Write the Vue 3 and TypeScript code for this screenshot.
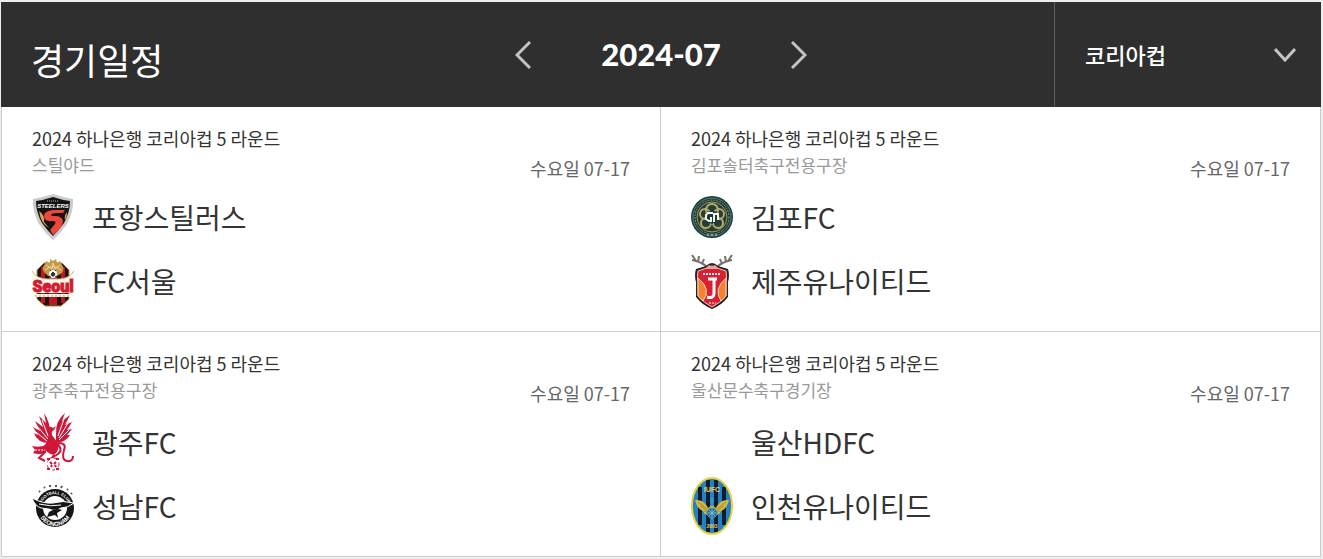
<script setup lang="ts">
import { computed, ref } from 'vue'

interface Team {
  name: string
  crest: string
}

interface Match {
  round: string
  venue: string
  date: string
  teams: Team[]
}

const matches: Match[] = [
  {
    round: '2024 하나은행 코리아컵 5 라운드',
    venue: '스틸야드',
    date: '수요일 07-17',
    teams: [
      { name: '포항스틸러스', crest: 'pohang' },
      { name: 'FC서울', crest: 'seoul' },
    ],
  },
  {
    round: '2024 하나은행 코리아컵 5 라운드',
    venue: '김포솔터축구전용구장',
    date: '수요일 07-17',
    teams: [
      { name: '김포FC', crest: 'gimpo' },
      { name: '제주유나이티드', crest: 'jeju' },
    ],
  },
  {
    round: '2024 하나은행 코리아컵 5 라운드',
    venue: '광주축구전용구장',
    date: '수요일 07-17',
    teams: [
      { name: '광주FC', crest: 'gwangju' },
      { name: '성남FC', crest: 'seongnam' },
    ],
  },
  {
    round: '2024 하나은행 코리아컵 5 라운드',
    venue: '울산문수축구경기장',
    date: '수요일 07-17',
    teams: [
      { name: '울산HDFC', crest: '' },
      { name: '인천유나이티드', crest: 'incheon' },
    ],
  },
]

const league = ref('cup')
const monthIndex = ref(2024 * 12 + 6)
const month = computed(() => {
  const year = Math.floor(monthIndex.value / 12)
  return `${year}-${String((monthIndex.value % 12) + 1).padStart(2, '0')}`
})
</script>

<template>
  <main class="schedule">
    <header class="bar">
      <h1 class="title">경기일정</h1>
      <nav class="months">
        <button type="button" class="arrow" aria-label="이전 달" @click="monthIndex--">
          <svg viewBox="0 0 16 28" width="16" height="28"><path d="M15 1 2 14 15 27" /></svg>
        </button>
        <time class="month">{{ month }}</time>
        <button type="button" class="arrow" aria-label="다음 달" @click="monthIndex++">
          <svg viewBox="0 0 16 28" width="16" height="28"><path d="M1 1 14 14 1 27" /></svg>
        </button>
      </nav>
      <div class="league">
        <select v-model="league" aria-label="대회">
          <option value="cup">코리아컵</option>
        </select>
        <svg class="chevron" viewBox="0 0 22 14" width="22" height="14"><path d="M1 1 11 12 21 1" /></svg>
      </div>
    </header>

    <section class="grid">
      <article v-for="(match, i) in matches" :key="i" class="card">
        <div class="info">
          <div>
            <h2 class="round">{{ match.round }}</h2>
            <p class="venue">{{ match.venue }}</p>
          </div>
          <p class="date">{{ match.date }}</p>
        </div>
        <ul class="teams">
          <li v-for="team in match.teams" :key="team.name" class="team">
            <svg class="crest" viewBox="0 0 44 60" aria-hidden="true">
              <g v-if="team.crest === 'pohang'">
                <path d="M22 7Q31 10 42 12Q43 24 36 37Q30 46 22 53Q14 46 8 37Q1 24 2 12Q13 10 22 7Z" fill="#c9cbcd" />
                <path d="M22 10Q31 13 39 14Q39 25 33 36Q28 43 22 49Q16 43 11 36Q5 25 5 14Q13 13 22 10Z" fill="#171314" />
                <path d="M34 23H22Q13 24 13 29Q13 35 21 34Q26 34 24 37L19 43 22 48Q32 40 32 34Q31 29 24 29Q20 29 20 28Q21 26 26 26H32Z" fill="#ed463b" />
                <path d="M8 24Q14 28 13 35L18 41Q10 37 8 24M36 25Q33 28 34 33Q36 30 36 25" fill="#dfa447" />
                <path d="M16 14H28" stroke="#b9b9b9" stroke-dasharray="1 1" />
                <text x="22" y="21" text-anchor="middle" font-size="6" font-weight="700" font-style="italic" fill="#fff">STEELERS</text>
              </g>
              <g v-else-if="team.crest === 'seoul'">
                <path d="M13 12H31L38 19V48L30 55H14L6 48V19Z" fill="#20120d" stroke="#b48a42" />
                <path d="M10 16H14V52H10ZM18 14H26V54H18ZM30 16H34V52H30Z" fill="#bc1727" />
                <path d="M15 10 19 12 19 8 22 10 25 8 26 12 29 10 31 14Q34 17 31 22L26 25H17L13 21Q10 16 14 13Z" fill="#c39a4d" />
                <path d="M15 14 21 18 22 12 24 18 29 14M14 19Q22 12 30 19" fill="none" stroke="#f1d89a" />
                <path d="M1 20Q6 28 16 28H29Q39 27 43 20V42H1Z" fill="#fffaf0" />
                <path d="M1 20Q6 28 16 28H29Q39 27 43 20" fill="none" stroke="#ccb176" />
                <circle cx="22" cy="23" r="4" fill="#fff" />
                <path d="M22 21 24 23 23 25H21L20 23ZM19 20 20 19M24 19 25 20M18 25 20 26M24 26 26 25" fill="#333" stroke="#333" />
                <text x="22" y="41" text-anchor="middle" font-family="Roboto, sans-serif" font-size="16" font-weight="900" fill="#d21b33" stroke="#d21b33">Seoul</text>
                <path d="M1 43H43V46H1Z" fill="#fff8e7" />
                <path d="M4 45H40" stroke="#b99a64" stroke-dasharray="2 2" />
              </g>
              <g v-else-if="team.crest === 'gimpo'">
                <circle cx="22" cy="30" r="21" fill="#173d39" />
                <circle cx="22" cy="30" r="19" fill="none" stroke="#627d70" />
                <circle cx="22" cy="30" r="17" fill="none" stroke="#8b9474" stroke-dasharray="2 1" />
                <circle cx="22" cy="30" r="15" fill="#213f38" stroke="#aa9656" />
                <g fill="none" stroke="#bcaa6c" stroke-width="2">
                  <circle cx="22" cy="23" r="6" /><circle cx="15" cy="27" r="5" /><circle cx="29" cy="27" r="5" />
                  <circle cx="16" cy="36" r="5" /><circle cx="28" cy="36" r="5" />
                </g>
                <path d="M22 23 28 26V34L22 37 16 34V26Z" fill="#173d39" />
                <path d="M23 26H18L16 28V32L19 34H21V30M24 35V27H28V33" fill="none" stroke="#f6f5e7" stroke-width="2" />
                <path d="M17 48H28" stroke="#d8dfd9" stroke-dasharray="2 2" />
              </g>
              <g v-else-if="team.crest === 'jeju'">
                <g fill="none" stroke="#77706c" stroke-width="2">
                  <path d="M17 16Q13 12 6 10L2 4M8 11 9 5M12 13 14 8M6 10 2 9M27 16Q31 12 38 10L42 4M36 11 35 5M32 13 30 8M38 10 42 9" />
                </g>
                <path d="M16 15Q22 9 28 15L38 18Q40 24 38 31V46Q32 54 22 58Q12 54 6 46V31Q4 24 6 18Z" fill="#292329" />
                <path d="M17 17Q22 13 27 17L36 20Q37 26 36 31V45Q30 52 22 56Q14 52 8 45V31Q7 26 8 20Z" fill="#d91f32" stroke="#f6cac2" />
                <path d="M8 27Q22 38 13 50Q7 46 8 41ZM36 27Q23 38 31 50Q37 46 36 41Z" fill="#f38232" stroke="#ffd4b0" />
                <path d="M15 18 19 14 22 16 25 14 29 18Z" fill="#f7a39d" />
                <path d="M13 23H31" stroke="#ffe2df" stroke-width="2" stroke-dasharray="2 1" />
                <path d="M18 28H27M24 28V43Q23 48 17 46" fill="none" stroke="#fff" stroke-width="3" />
                <path d="M19 52H26" stroke="#fff" stroke-dasharray="2 1" />
              </g>
              <g v-else-if="team.crest === 'gwangju'">
                <g fill="#cf1739">
                  <path d="M19 25Q20 11 13 1L15 11 8 4 12 15 4 9 9 19 2 15 7 23 3 21Q6 31 19 31Z" />
                  <path d="M25 23Q24 9 34 1L31 9 39 3 34 13 41 10 36 18 41 17 36 23 39 23Q35 30 25 31Z" />
                  <path d="M16 17Q18 13 22 16L25 14 23 18Q20 19 21 23L26 30Q30 38 23 43Q15 42 13 34L19 26Z" />
                </g>
                <path d="M11 8 17 24M6 14 17 27M5 20 16 29M33 7 27 24M37 11 28 26M38 18 28 28" stroke="#fff" />
                <path d="M25 31Q33 37 27 42L19 47M27 31Q36 31 33 38Q30 48 36 49Q42 50 42 44M23 43 17 51M14 40 8 46 14 49" fill="none" stroke="#cf1739" stroke-width="2" />
                <path d="M1 34Q8 36 15 33V41Q8 43 2 41L4 38Z" fill="#cf1739" />
                <path d="M4 38H14" stroke="#fff" stroke-dasharray="2 1" />
                <circle cx="22" cy="52" r="6" fill="#fff" stroke="#cf1739" stroke-dasharray="3 4" />
                <path d="M19 50 21 52M25 50 23 52M20 55 21 53M25 55 24 53M16 47 19 47M25 47 28 47M16 57 19 57M25 57 28 57" stroke="#cf1739" stroke-width="2" />
              </g>
              <g v-else-if="team.crest === 'seongnam'">
                <path d="M8 15 9 16M13 11 14 12M19 9V11M25 9V11M31 10 30 12M37 13 36 14M41 17 40 18" stroke="#555" stroke-width="2" />
                <circle cx="24" cy="32" r="19" fill="#151515" />
                <circle cx="24" cy="32" r="12" fill="#fff" />
                <path id="seongnam-top" d="M10 32A14 14 0 0 1 38 32" fill="none" />
                <path id="seongnam-base" d="M7 33A17 17 0 0 0 41 33" fill="none" />
                <text font-size="4" font-weight="700" fill="#fff"><textPath href="#seongnam-top" startOffset="50%" text-anchor="middle">FOOTBALL CLUB</textPath></text>
                <text font-size="6" font-weight="700" fill="#fff"><textPath href="#seongnam-base" startOffset="50%" text-anchor="middle">SEONGNAM</textPath></text>
                <path d="M1 22Q12 28 22 27Q32 24 43 27Q37 32 30 32Q24 36 18 33L10 32Q4 30 1 22Z" fill="#151515" stroke="#fff" />
                <path d="M18 36Q25 31 31 34L26 37 27 42 24 39 16 41Z" fill="#151515" />
                <path d="M8 28Q20 31 30 29" fill="none" stroke="#fff" />
              </g>
              <g v-else-if="team.crest === 'incheon'">
                <ellipse cx="22" cy="30" rx="20" ry="28" fill="#2182c5" />
                <path d="M8 11H12V49H8ZM16 4H20V56H16ZM24 4H28V56H24ZM32 11H36V49H32Z" fill="#121c2b" />
                <ellipse cx="22" cy="30" rx="20" ry="28" fill="none" stroke="#ebcf39" stroke-width="2" />
                <text x="22" y="16" text-anchor="middle" font-size="7" font-weight="700" fill="#f1cf49">IUFC</text>
                <path d="M5 24Q14 23 18 32L22 29 26 32Q30 23 39 24Q37 33 31 35Q30 39 25 39L22 43 19 39Q14 39 13 35Q7 33 5 24Z" fill="#d5b642" />
                <path d="M8 26 17 33M10 30 18 35M14 35 19 37M36 26 27 33M34 30 26 35M30 35 25 37" stroke="#a58c38" />
                <path d="M22 21V30M20 25H24" stroke="#3c93c5" stroke-width="2" />
                <circle cx="22" cy="37" r="5" fill="#1768a1" stroke="#4b9dc7" />
                <path d="M18 37H26M22 33V41M19 34 25 40M19 40 25 34" stroke="#8bbbc0" />
                <text x="22" y="52" text-anchor="middle" font-size="5" font-weight="700" fill="#f1cf49">2003</text>
              </g>
            </svg>
            <span>{{ team.name }}</span>
          </li>
        </ul>
      </article>
    </section>
  </main>
</template>

<style>
body {
  margin: 0;
  background: #eceeef;
}
</style>

<style scoped>
.schedule {
  box-sizing: border-box;
  padding: 2px 2px 2px 1px;
  font-family: "Noto Sans CJK KR", sans-serif;
  color: #333;
}

h1,
h2,
p,
ul {
  margin: 0;
  padding: 0;
  font-weight: 400;
}

.bar {
  display: grid;
  grid-template-columns: 1fr auto 1fr;
  align-items: center;
  height: 105px;
  background: #2f2f2f;
  color: #fff;
}

.title {
  padding: 8px 0 0 30px;
  font-size: 36px;
  line-height: 52px;
}

.months {
  display: flex;
  align-items: center;
  gap: 66px;
}

.arrow {
  display: flex;
  padding: 4px;
  border: 0;
  background: none;
  cursor: pointer;
}

.arrow path,
.chevron path {
  fill: none;
  stroke: #c4c4c4;
  stroke-width: 3;
}

.month {
  min-width: 120px;
  padding-bottom: 2px;
  text-align: center;
  font-family: Lato, sans-serif;
  font-size: 31px;
  font-weight: 900;
  line-height: 40px;
}

.league {
  display: grid;
  align-items: center;
  justify-self: end;
  box-sizing: border-box;
  width: 267px;
  height: 100%;
  border-left: 1px solid #606060;
}

.league select,
.chevron {
  grid-area: 1 / 1;
}

.league select {
  width: 100%;
  height: 100%;
  padding: 0 30px 2px;
  border: 0;
  appearance: none;
  background: transparent;
  color: #fff;
  font: 500 22px "Noto Sans CJK KR", sans-serif;
}

.chevron {
  justify-self: end;
  margin-right: 25px;
  pointer-events: none;
}

.grid {
  display: grid;
  grid-template-columns: 1fr 1fr;
  row-gap: 1px;
  border: 1px solid #ccc;
  border-top: 0;
  background: #ccc;
}

.card {
  padding: 17px 30px 18px;
  background: #fff;
}

.card:nth-child(odd) {
  border-right: 1px solid #ccc;
}

.info {
  display: flex;
  justify-content: space-between;
  align-items: flex-end;
  height: 61px;
}

.info > div {
  align-self: flex-start;
}

.round {
  font-size: 18px;
  line-height: 28px;
}

.venue {
  color: #999;
  font-size: 17px;
  line-height: 26px;
}

.date {
  padding-bottom: 3px;
  color: #666;
  font-size: 18px;
  line-height: 28px;
}

.teams {
  list-style: none;
}

.team {
  display: flex;
  align-items: center;
  gap: 17px;
  height: 64px;
  font-size: 28px;
  line-height: 40px;
}

.crest {
  flex: none;
  width: 44px;
  height: 60px;
  margin-left: -1px;
  font-family: "Liberation Sans", sans-serif;
}
</style>
